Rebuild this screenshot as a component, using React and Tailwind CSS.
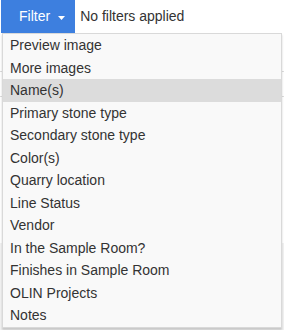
export default function App() {
  const fields = [
    "Preview image",
    "More images",
    "Name(s)",
    "Primary stone type",
    "Secondary stone type",
    "Color(s)",
    "Quarry location",
    "Line Status",
    "Vendor",
    "In the Sample Room?",
    "Finishes in Sample Room",
    "OLIN Projects",
    "Notes",
  ];

  return (
    <div className="relative w-[284px] h-[330px] bg-white overflow-hidden font-['Liberation_Sans',Arial,sans-serif] text-[14px] text-[#333]">
      {/* page content peeking out behind the menu */}
      <div className="absolute left-0 top-[71px] w-[284px] border-t border-[#ddd]" />
      <div className="absolute left-0 top-[96px] w-[284px] border-t border-[#ddd]" />
      <div className="absolute left-0 top-[243px] w-[284px] h-[90px] bg-[#f2f2f2]" />

      <div className="relative flex items-center h-[33px]">
        <button className="flex items-center h-[33px] ml-[1px] pl-[18px] pr-[10px] bg-[#3d7fdf] text-white text-[14px]">
          Filter
          <svg className="ml-[8px] mt-[2px]" width="7" height="4" viewBox="0 0 7 4">
            <path d="M0 0 H7 L3.5 4 Z" fill="white" />
          </svg>
        </button>
        <span className="ml-[5px] text-[14px]">No filters applied</span>
      </div>

      <ul className="absolute left-[2px] top-[33px] w-[280px] bg-[#f9f9f9] border border-[#d9d9d9] shadow-[0_2px_2px_rgba(0,0,0,0.18)]">
        {fields.map((f) => (
          <li
            key={f}
            className={`h-[22.5px] leading-[22.5px] pl-[7px] ${
              f === "Name(s)" ? "bg-[#dcdcdc]" : ""
            }`}
          >
            {f}
          </li>
        ))}
      </ul>
    </div>
  );
}
